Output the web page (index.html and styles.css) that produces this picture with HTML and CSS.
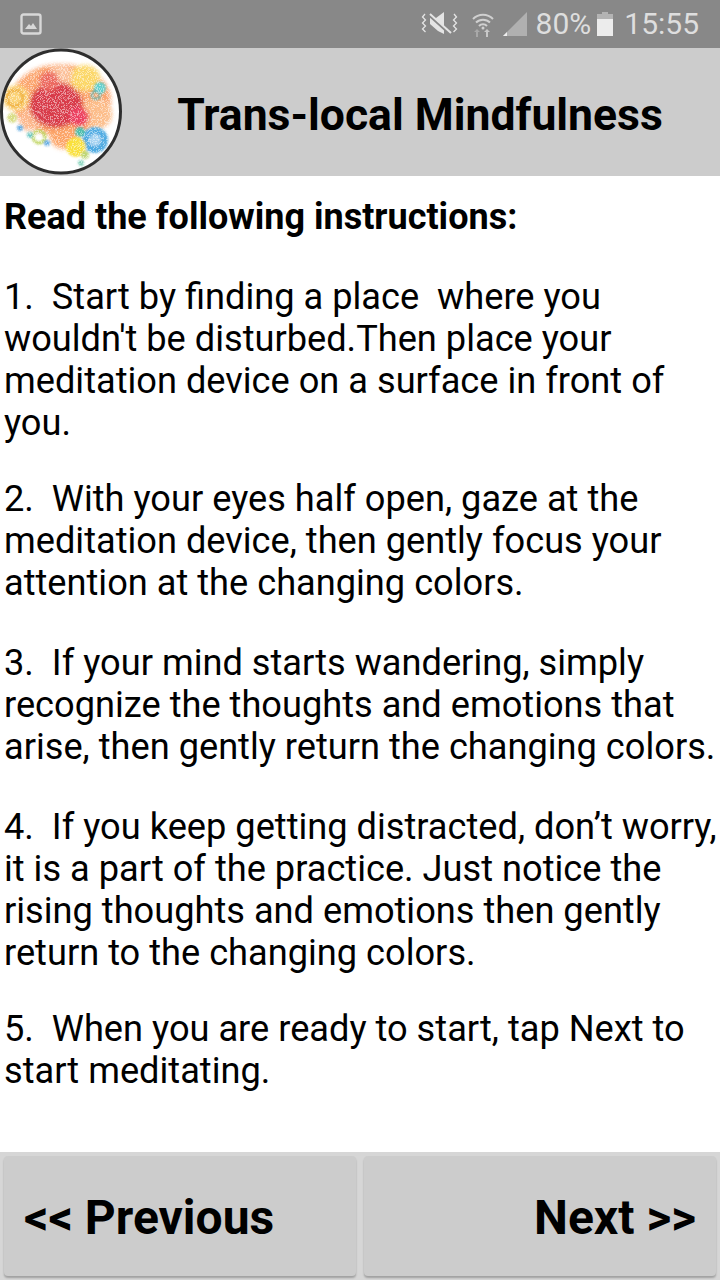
FILE: index.html
```html
<!DOCTYPE html>
<html lang="en">
<head>
<meta charset="utf-8">
<title>Trans-local Mindfulness</title>
<link rel="stylesheet" href="styles.css">
</head>
<body>
<div class="app">
  <div class="status">
    <svg class="ic-pic" width="22" height="24" viewBox="0 0 22 24"><rect x="1.500" y="2.500" width="19" height="19" rx="2" fill="none" stroke="#d8d8d8" stroke-width="2.400"/><path d="M5 17l4-5 2 2 2-3 4 6z" fill="#d8d8d8"/></svg>
    <div class="status-right">
      <svg class="ic-vib" width="38" height="26" viewBox="0 0 38 26"><path d="M4 3L1.500 6l3 3-3 3 3 3-3 3 3 3M33 3l2.500 3-3 3 3 3-3 3 3 3-3 3" fill="none" stroke="#e4e4e4" stroke-width="1.300"/><path d="M9 7h6l8-6v22l-6-3-8-7z" fill="#e4e4e4"/><path d="M9 5l21 19" stroke="#888" stroke-width="2.500"/><path d="M9 3l21 19" stroke="#e4e4e4" stroke-width="2"/></svg>
      <svg class="ic-wifi" width="24" height="26" viewBox="0 0 24 26"><path d="M2 8a14 14 0 0 1 20 0M5 11.500a10 10 0 0 1 14 0M8 15a5.500 5.500 0 0 1 8 0" fill="none" stroke="#d0d0d0" stroke-width="2"/><circle cx="12" cy="17" r="1.500" fill="#d0d0d0"/><path d="M5 26v-5H3l3-3 3 3H7v5z" fill="#a8a8a8"/><path d="M15 26v-5h-2l3-3 3 3h-2v5z" fill="#c8c8c8"/></svg>
      <svg class="ic-sig" width="24" height="24" viewBox="0 0 24 24"><path d="M0 24L24 0v24z" fill="#b0b0b0"/><path d="M0 24l4-4v4z" fill="#eee"/></svg>
      <span class="pct">80%</span>
      <svg class="ic-bat" width="16" height="24" viewBox="0 0 16 24"><path d="M5 0h6v2h5v22H0V2h5z" fill="#b4b4b4"/><rect y="7" width="16" height="17" fill="#ececec"/></svg>
      <span class="time">15:55</span>
    </div>
  </div>

  <header class="head">
    <svg class="logo" width="122" height="128" viewBox="0 0 122 128">
      <defs>
        <filter id="speck" x="0" y="0" width="100%" height="100%">
          <feTurbulence type="fractalNoise" baseFrequency="1.300" numOctaves="1" seed="11" result="n"/>
          <feColorMatrix in="n" type="matrix" values="0 0 0 0 1  0 0 0 0 1  0 0 0 0 1  0 0 0 -9 4.500"/>
        </filter>
        <filter id="soft" x="-20%" y="-20%" width="140%" height="140%"><feGaussianBlur stdDeviation="2"/></filter>
        <filter id="soft2" x="-20%" y="-20%" width="140%" height="140%"><feGaussianBlur stdDeviation="1"/></filter>
        <clipPath id="disc"><ellipse cx="61" cy="63.500" rx="59" ry="61"/></clipPath>
      </defs>
      <ellipse cx="61" cy="63.500" rx="60" ry="62" fill="#fff"/>
      <g clip-path="url(#disc)">
        <g filter="url(#soft)">
          <ellipse cx="61" cy="52" rx="50" ry="36" fill="#fba56e"/>
          <ellipse cx="85" cy="30" rx="15" ry="13" fill="#fbd768"/>
          <circle cx="16" cy="50" r="13" fill="#fbd377"/>
          <circle cx="30" cy="72" r="11" fill="#fcb78c"/>
          <circle cx="64" cy="86" r="15" fill="#fca467"/>
          <circle cx="97" cy="66" r="15" fill="#fcbd8a"/>
          <circle cx="60" cy="28" r="12" fill="#fbc09a"/>
          <ellipse cx="56" cy="57" rx="27" ry="23" fill="#d83a48"/>
          <circle cx="49" cy="33" r="10" fill="#ec6a60"/>
          <circle cx="79" cy="69" r="10" fill="#ec3f60"/>
        </g>
        <g filter="url(#soft2)">
          <circle cx="15" cy="50" r="8" fill="none" stroke="#efb040" stroke-width="3"/>
          <circle cx="100" cy="40" r="6" fill="#62d0ce"/>
          <circle cx="96" cy="47" r="4" fill="none" stroke="#4cb2b6" stroke-width="2"/>
          <circle cx="95" cy="92" r="13" fill="#4fabe2"/>
          <circle cx="95" cy="92" r="6" fill="#a8d4f2"/>
          <circle cx="80" cy="84" r="5" fill="#4fbfae"/>
          <circle cx="76" cy="99" r="10" fill="#f9e03c"/>
          <circle cx="39" cy="89" r="6" fill="none" stroke="#bdd35c" stroke-width="3"/>
          <circle cx="20" cy="80" r="3" fill="#62ace4"/>
          <circle cx="30" cy="87" r="3" fill="#6cc8c4"/>
          <circle cx="47" cy="95" r="3" fill="#62ace4"/>
          <circle cx="81" cy="115" r="3" fill="#7fd0b8"/>
          <circle cx="85" cy="107" r="4" fill="#bed676"/>
          <circle cx="12" cy="70" r="5" fill="#d8dd86"/>
        </g>
        <rect width="122" height="128" filter="url(#speck)" opacity=".5"/>
      </g>
      <ellipse cx="61" cy="63.500" rx="59.500" ry="61.500" fill="none" stroke="#2e2e2e" stroke-width="3"/>
    </svg>
    <h1 class="title">Trans-local Mindfulness</h1>
  </header>

  <main class="body">
    <p class="lead">Read the following instructions:</p>
    <p class="tight">1.&nbsp; Start by finding a place&nbsp; where you wouldn't be disturbed.Then place your meditation device on a surface in front of you.</p>
    <p>2.&nbsp; With your eyes half open, gaze at the meditation device, then gently focus your attention at the changing colors.</p>
    <p>3.&nbsp; If your mind starts wandering, simply recognize the thoughts and emotions that arise, then gently return the changing colors.</p>
    <p class="tight">4.&nbsp; If you keep getting distracted, don’t worry, it is a part of the practice. Just notice the rising thoughts and emotions then gently return to the changing colors.</p>
    <p>5.&nbsp; When you are ready to start, tap Next to start meditating.</p>
  </main>

  <footer class="foot">
    <button class="btn btn-prev" type="button">&lt;&lt; Previous</button>
    <button class="btn btn-next" type="button">Next &gt;&gt;</button>
  </footer>
</div>
</body>
</html>
```
FILE: styles.css
```css
* { box-sizing: border-box; }
html, body { margin: 0; padding: 0; }
body { background: #fff; color: #000; font-family: Roboto, "Liberation Sans", sans-serif; }
.app { width: 720px; height: 1280px; display: flex; flex-direction: column; overflow: hidden; }

.status { height: 48px; flex: none; background: #888; color: #dedede; display: flex; align-items: center; justify-content: space-between; padding: 0 21px 0 20px; }
.status-right { display: flex; align-items: center; }
.status svg { display: block; }
.ic-vib { margin-right: 12px; }
.ic-wifi { margin-right: 8px; }
.ic-sig { margin-right: 9px; }
.pct, .time { font-size: 30px; line-height: 48px; }
.ic-bat { margin: 0 11px 0 6px; }

.head { height: 128px; flex: none; background: #ccc; display: flex; align-items: center; }
.logo { flex: none; display: block; }
.title { flex: 1; margin: 0; padding: 6px 2px 0 0; text-align: center; font-size: 44.500px; font-weight: 700; line-height: 50px; white-space: nowrap; }

.body { flex: 1; padding: 20px 0 0 4px; font-size: 36.200px; line-height: 42px; }
.body p { margin: 0 0 38px; }
.body .tight { margin-bottom: 34px; }
.body .lead { font-size: 36px; font-weight: 700; }

.foot { height: 128px; flex: none; background: #d6d6d6; display: flex; gap: 8px; padding: 4px; }
.btn { flex: 1; border: 0; border-radius: 4px; background: #ccc; color: #000; font: 700 48px/56px Roboto, "Liberation Sans", sans-serif; padding: 4px 20px 0; box-shadow: 0 2px 2px rgba(0,0,0,.25); }
.btn-prev { text-align: left; }
.btn-next { text-align: right; }
```
